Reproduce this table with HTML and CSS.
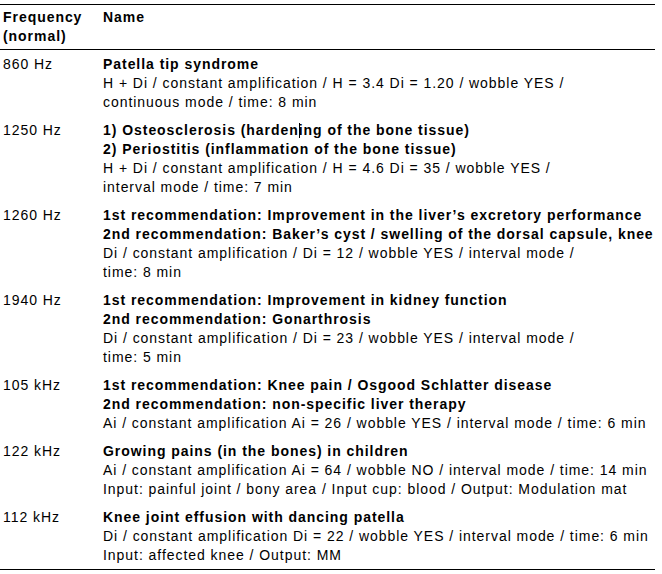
FILE: index.html
```html
<!DOCTYPE html>
<html lang="en">
<head>
<meta charset="utf-8">
<title>Frequencies</title>
<link rel="stylesheet" href="styles.css">
</head>
<body>
<div class="table">
  <div class="row head">
    <div class="freq">Frequency<br>(normal)</div>
    <div class="name">Name</div>
  </div>
  <div class="row">
    <div class="freq">860 Hz</div>
    <div class="name">
      <div class="b">Patella tip syndrome</div>
      <div>H + Di / constant amplification / H = 3.4 Di = 1.20 / wobble YES /</div>
      <div>continuous mode / time: 8 min</div>
    </div>
  </div>
  <div class="row">
    <div class="freq">1250 Hz</div>
    <div class="name">
      <div class="b">1) Osteosclerosis (harden<span class="caret"></span>ing of the bone tissue)</div>
      <div class="b">2) Periostitis (inflammation of the bone tissue)</div>
      <div>H + Di / constant amplification / H = 4.6 Di = 35 / wobble YES /</div>
      <div>interval mode / time: 7 min</div>
    </div>
  </div>
  <div class="row">
    <div class="freq">1260 Hz</div>
    <div class="name">
      <div class="b">1st recommendation: Improvement in the liver’s excretory performance</div>
      <div class="b">2nd recommendation: Baker’s cyst / swelling of the dorsal capsule, knee</div>
      <div>Di / constant amplification / Di = 12 / wobble YES / interval mode /</div>
      <div>time: 8 min</div>
    </div>
  </div>
  <div class="row">
    <div class="freq">1940 Hz</div>
    <div class="name">
      <div class="b">1st recommendation: Improvement in kidney function</div>
      <div class="b">2nd recommendation: Gonarthrosis</div>
      <div>Di / constant amplification / Di = 23 / wobble YES / interval mode /</div>
      <div>time: 5 min</div>
    </div>
  </div>
  <div class="row">
    <div class="freq">105 kHz</div>
    <div class="name">
      <div class="b">1st recommendation: Knee pain / Osgood Schlatter disease</div>
      <div class="b">2nd recommendation: non-specific liver therapy</div>
      <div>Ai / constant amplification Ai = 26 / wobble YES / interval mode / time: 6 min</div>
    </div>
  </div>
  <div class="row">
    <div class="freq">122 kHz</div>
    <div class="name">
      <div class="b">Growing pains (in the bones) in children</div>
      <div>Ai / constant amplification Ai = 64 / wobble NO / interval mode / time: 14 min</div>
      <div>Input: painful joint / bony area / Input cup: blood / Output: Modulation mat</div>
    </div>
  </div>
  <div class="row last">
    <div class="freq">112 kHz</div>
    <div class="name">
      <div class="b">Knee joint effusion with dancing patella</div>
      <div>Di / constant amplification Di = 22 / wobble YES / interval mode / time: 6 min</div>
      <div>Input: affected knee / Output: MM</div>
    </div>
  </div>
</div>
</body>
</html>
```
FILE: styles.css
```css
html, body {
  margin: 0;
  padding: 0;
  background: #ffffff;
}
body {
  font-family: "Liberation Sans", Arial, sans-serif;
  font-size: 14px;
  line-height: 19px;
  letter-spacing: 0.95px;
  color: #000000;
}
.table {
  margin-top: 4px;
  width: 655px;
  border-top: 1px solid #000000;
  border-bottom: 1px solid #000000;
}
.row {
  display: grid;
  grid-template-columns: 100px 1fr;
  padding: 5px 0 4px 3px;
}
.row.head {
  font-weight: bold;
  padding: 3px 0 3px 3px;
  border-bottom: 1px solid #000000;
}
.name > div {
  white-space: nowrap;
}
.b {
  font-weight: bold;
}
.caret {
  display: inline-block;
  width: 1px;
  height: 15px;
  background: #000000;
  vertical-align: -3px;
  margin-right: -1px;
}
```
